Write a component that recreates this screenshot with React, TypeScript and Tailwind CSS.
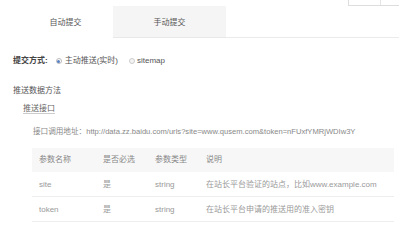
import React from 'react';

const rows = [
  { name: 'site', req: '是', type: 'string', desc: '在站长平台验证的站点，比如www.example.com' },
  { name: 'token', req: '是', type: 'string', desc: '在站长平台申请的推送用的准入密钥' },
];

export default function App() {
  return (
    <div
      className="w-[399px] h-[225px] overflow-hidden bg-white text-[8px] text-[#666]"
      style={{ fontFamily: '"Liberation Sans", "Noto Sans CJK SC", sans-serif' }}
    >
      {/* 右上角被截断的按钮组 */}
      <div className="h-[6px] flex justify-end">
        <div className="w-[51px] h-[6px] border-l border-b border-[#ddd] flex">
          <div className="w-[32px] border-r border-[#e5e5e5]" />
        </div>
      </div>

      {/* Tabs */}
      <div className="flex h-[32px] pl-[18px]">
        <div className="w-[95px] flex items-center justify-center text-[#555] pt-[2px]">自动提交</div>
        <div className="w-[113px] flex items-center justify-center bg-[#f5f5f5] border-b border-[#e8e8e8] text-[#555] pt-[2px]">
          手动提交
        </div>
        <div className="flex-1 border-b border-[#ebebeb]" />
      </div>

      {/* 提交方式 */}
      <div className="mt-[18px] h-[10px] flex items-center pl-[13px] leading-none">
        <span className="font-bold text-[#444]">提交方式:</span>
        <span className="ml-[8px] w-[6px] h-[6px] rounded-full border border-[#bbb] flex items-center justify-center">
          <span className="w-[3px] h-[3px] rounded-full bg-[#5b7fc4]" />
        </span>
        <span className="ml-[3px] text-[#555]">主动推送(实时)</span>
        <span className="ml-[11px] w-[6px] h-[6px] rounded-full border border-[#ccc] bg-[#f4f4f4]" />
        <span className="ml-[2px] text-[#555]">sitemap</span>
      </div>

      <div className="mt-[20px] h-[10px] flex items-center pl-[13px] leading-none text-[#555]">推送数据方法</div>
      <div className="mt-[8px] h-[10px] flex items-center pl-[23px] leading-none">
        <span className="border-b border-[#ccc] text-[#666]">推送接口</span>
      </div>

      <div className="mt-[13px] h-[10px] flex items-center pl-[33px] leading-none text-[7.6px] text-[#888] whitespace-nowrap">
        接口调用地址：http://data.zz.baidu.com/urls?site=www.qusem.com&amp;token=nFUxfYMRjWDIw3Y
      </div>

      {/* 参数表 */}
      <div className="mt-[11px] ml-[32px] mr-[5px] text-[#999]">
        <div className="grid grid-cols-[64px_52px_51px_1fr] h-[24px] items-center pl-[7px] bg-[#f7f7f7] text-[#888]">
          <span>参数名称</span>
          <span>是否必选</span>
          <span>参数类型</span>
          <span>说明</span>
        </div>
        {rows.map((r) => (
          <div
            key={r.name}
            className="grid grid-cols-[64px_52px_51px_1fr] h-[25px] items-center pl-[7px] border-b border-[#eee] pt-[2px]"
          >
            <span>{r.name}</span>
            <span>{r.req}</span>
            <span>{r.type}</span>
            <span className="whitespace-nowrap">{r.desc}</span>
          </div>
        ))}
      </div>
    </div>
  );
}
